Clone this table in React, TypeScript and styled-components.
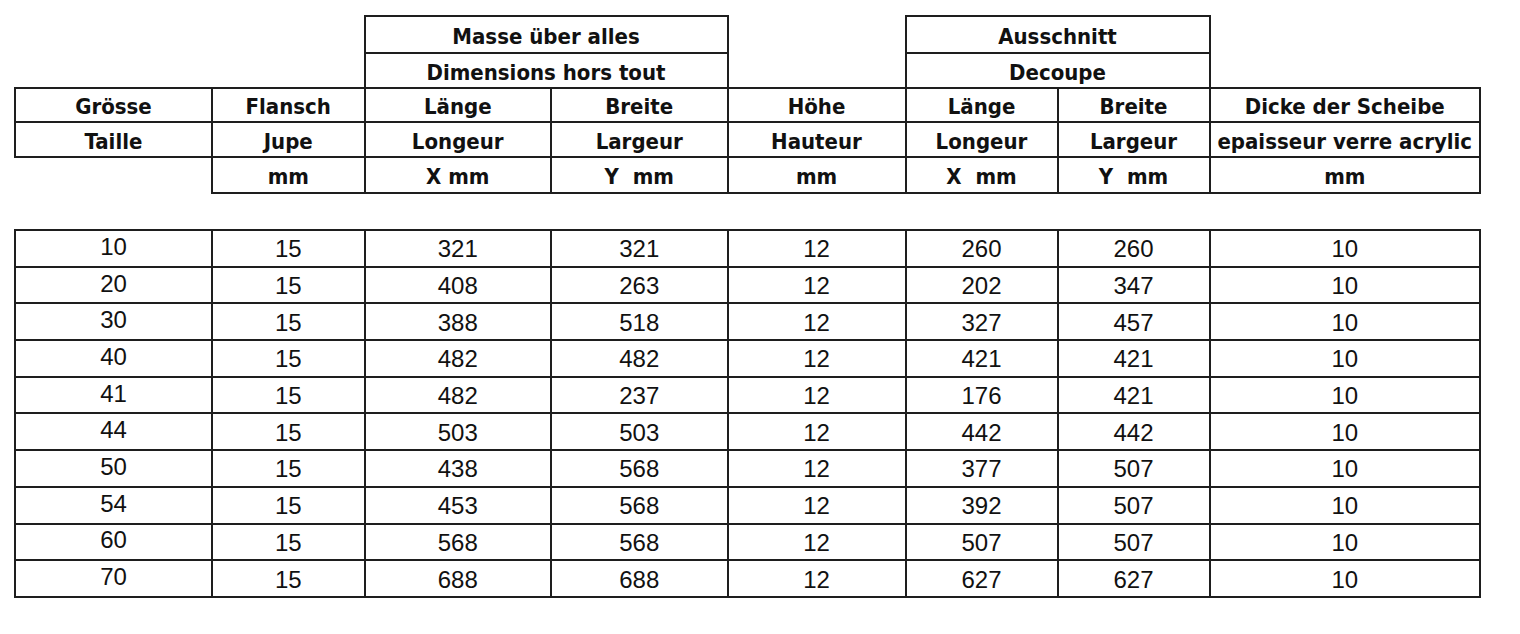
import styled, { createGlobalStyle } from 'styled-components'

const GlobalStyle = createGlobalStyle`
  html, body {
    margin: 0;
    padding: 0;
    background: #fff;
    color: #111;
  }
`

const COLS = [197, 152.5, 186.5, 176.5, 178, 152, 152, 270.5]

const ROWS = [
  ['10', '15', '321', '321', '12', '260', '260', '10'],
  ['20', '15', '408', '263', '12', '202', '347', '10'],
  ['30', '15', '388', '518', '12', '327', '457', '10'],
  ['40', '15', '482', '482', '12', '421', '421', '10'],
  ['41', '15', '482', '237', '12', '176', '421', '10'],
  ['44', '15', '503', '503', '12', '442', '442', '10'],
  ['50', '15', '438', '568', '12', '377', '507', '10'],
  ['54', '15', '453', '568', '12', '392', '507', '10'],
  ['60', '15', '568', '568', '12', '507', '507', '10'],
  ['70', '15', '688', '688', '12', '627', '627', '10'],
]

const ColGroup = () => (
  <colgroup>
    {COLS.map((w, i) => (
      <Styled.Col key={i} $w={w} />
    ))}
  </colgroup>
)

const App = () => {
  return (
    <Styled.Page>
      <GlobalStyle />
      <Styled.HeadTable>
        <ColGroup />
        <thead>
          <Styled.HeadRow $h={37}>
            <Styled.Th $blank />
            <Styled.Th $blank />
            <Styled.Th colSpan={2}>Masse über alles</Styled.Th>
            <Styled.Th $blank />
            <Styled.Th colSpan={2}>Ausschnitt</Styled.Th>
            <Styled.Th $blank />
          </Styled.HeadRow>
          <Styled.HeadRow $h={35}>
            <Styled.Th $blank />
            <Styled.Th $blank />
            <Styled.Th colSpan={2}>Dimensions hors tout</Styled.Th>
            <Styled.Th $blank />
            <Styled.Th colSpan={2}>Decoupe</Styled.Th>
            <Styled.Th $blank />
          </Styled.HeadRow>
          <Styled.HeadRow $h={34}>
            <Styled.Th>Grösse</Styled.Th>
            <Styled.Th>Flansch</Styled.Th>
            <Styled.Th>Länge</Styled.Th>
            <Styled.Th>Breite</Styled.Th>
            <Styled.Th>Höhe</Styled.Th>
            <Styled.Th>Länge</Styled.Th>
            <Styled.Th>Breite</Styled.Th>
            <Styled.Th>Dicke der Scheibe</Styled.Th>
          </Styled.HeadRow>
          <Styled.HeadRow $h={35}>
            <Styled.Th>Taille</Styled.Th>
            <Styled.Th>Jupe</Styled.Th>
            <Styled.Th>Longeur</Styled.Th>
            <Styled.Th>Largeur</Styled.Th>
            <Styled.Th>Hauteur</Styled.Th>
            <Styled.Th>Longeur</Styled.Th>
            <Styled.Th>Largeur</Styled.Th>
            <Styled.Th>epaisseur verre acrylic</Styled.Th>
          </Styled.HeadRow>
          <Styled.HeadRow $h={36}>
            <Styled.Th $blank />
            <Styled.Th>mm</Styled.Th>
            <Styled.Th>X mm</Styled.Th>
            <Styled.Th>Y  mm</Styled.Th>
            <Styled.Th>mm</Styled.Th>
            <Styled.Th>X  mm</Styled.Th>
            <Styled.Th>Y  mm</Styled.Th>
            <Styled.Th>mm</Styled.Th>
          </Styled.HeadRow>
        </thead>
      </Styled.HeadTable>

      <Styled.DataTable>
        <ColGroup />
        <tbody>
          {ROWS.map((row) => (
            <Styled.DataRow key={row[0]}>
              {row.map((v, i) => (
                <Styled.Td key={i} $lead={i === 0}>
                  {v}
                </Styled.Td>
              ))}
            </Styled.DataRow>
          ))}
        </tbody>
      </Styled.DataTable>
    </Styled.Page>
  )
}

export default App

const Styled = {
  Page: styled.div`
    padding: 15px 0 0 14px;
  `,
  Col: styled.col<{ $w: number }>`
    width: ${(p) => p.$w}px;
  `,
  HeadTable: styled.table`
    border-collapse: collapse;
    table-layout: fixed;
    width: 1466px;
    font-family: 'DejaVu Sans Condensed', 'DejaVu Sans', sans-serif;
    font-stretch: condensed;
  `,
  HeadRow: styled.tr<{ $h: number }>`
    height: ${(p) => p.$h}px;
  `,
  Th: styled.th<{ $blank?: boolean }>`
    border: ${(p) => (p.$blank ? 'none' : '2px solid #1e1e1e')};
    padding: 3px 0 0;
    text-align: center;
    vertical-align: middle;
    font-size: 22px;
    font-weight: 700;
    white-space: pre;
    color: #111;
  `,
  DataTable: styled.table`
    border-collapse: collapse;
    table-layout: fixed;
    width: 1466px;
    margin-top: 35px;
    font-family: 'Liberation Sans', Arial, sans-serif;
  `,
  DataRow: styled.tr`
    height: 36.7px;
  `,
  Td: styled.td<{ $lead?: boolean }>`
    border: 2px solid #1e1e1e;
    padding: ${(p) => (p.$lead ? '0 0 3px' : '2px 0 0')};
    line-height: 1;
    text-align: center;
    vertical-align: middle;
    font-size: 24px;
    color: #111;
  `,
}
